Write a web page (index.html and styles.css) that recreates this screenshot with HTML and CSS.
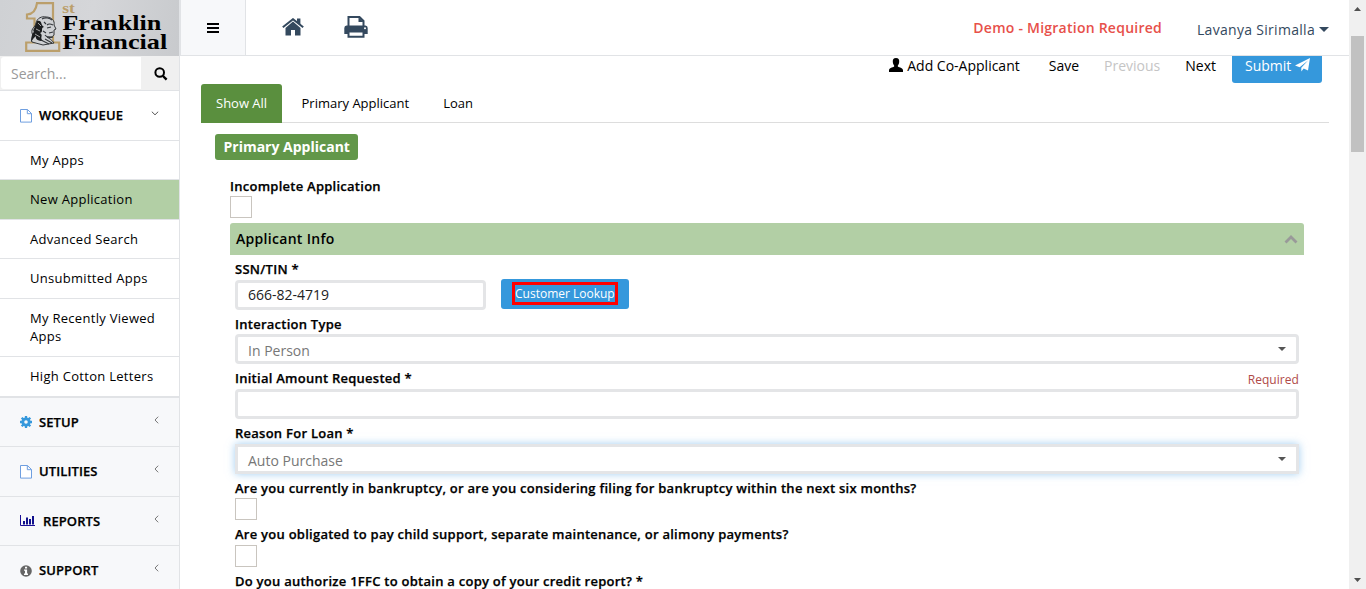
FILE: index.html
```html
<!DOCTYPE html>
<html lang="en">
<head>
<meta charset="utf-8">
<title>New Application</title>
<link rel="stylesheet" href="styles.css">
</head>
<body>
<div class="app">
  <aside class="sidebar">
    <div class="logo">
      <svg class="logo-mark" width="36" height="50" viewBox="0 0 36 50">
        <path d="M12 1.2H28V40.5H34.2V48.8H1.2V40.5H9.5V16.5H2V12.5C7 12.3 11 9 12 1.2Z" fill="#d3d5d8" stroke="#bb9f6b" stroke-width="2.2"/>
        <path d="M11 21C12 16 17 14 21 15C27 15 30 19 29 23L31 27L29 28L29 33C27 36 24 34 22 35C25 37 27 38 29 41L18 43L7 40C5 37 9 35 7 31C6 26 10 26 11 21Z" fill="#ced0d3" stroke="#34373a" stroke-width="1"/>
        <path d="M12 19C18 18 15 23 19 25C15 26 19 30 15 31C19 34 14 35 18 39C13 39 10 37 11 34C8 36 7 39 6 40C7 36 6 32 9 30C7 28 10 26 10 24Z" fill="#1c1e20"/>
        <path d="M13 21L16 24M11 27L15 29M10 32L15 35M8 37L12 40" stroke="#ccc" stroke-width=".8"/>
        <path d="M17 17C20 15 25 16 27 18M22 23C24 21 26 22 28 23M22 26L26 25M24 31L28 30M20 33C22 36 25 36 28 35M16 38L24 42M20 37L27 41M19 20L21 22M18 29L21 31" fill="none" stroke="#33373b" stroke-width="1.1"/>
      </svg>
      <div class="logo-text"><span class="logo-st">st</span><span>Franklin</span><span>Financial</span></div>
    </div>
    <div class="search">
      <div class="search-input">Search...</div>
      <div class="search-btn"><svg width="14" height="14" viewBox="0 0 14 14"><circle cx="5.7" cy="5.5" r="4.3" fill="none" stroke="#000" stroke-width="2"/><path d="M9 9L12.6 12.7" stroke="#000" stroke-width="2.4"/></svg></div>
    </div>
    <div class="group group-open">
      <svg class="gi" width="12" height="14" viewBox="0 0 12 14"><path d="M.5 .5H7.5L11.5 4.5V13.1H.5ZM7.3 .5V4.7H11.5" fill="#fff" stroke="#6f9fe0"/></svg>
      <span class="gt">WORKQUEUE</span>
      <svg class="caret" width="8" height="5" viewBox="0 0 8 5"><path d="M.8 .7L4 3.8L7.2 .7" fill="none" stroke="#555"/></svg>
    </div>
    <div class="item h39">My Apps</div>
    <div class="item h40 active">New Application</div>
    <div class="item h39">Advanced Search</div>
    <div class="item h40">Unsubmitted Apps</div>
    <div class="item h58">My Recently Viewed<br>Apps</div>
    <div class="item h40">High Cotton Letters</div>
    <div class="group first">
      <svg class="gi" width="12" height="12" viewBox="0 0 12 12"><circle cx="6" cy="6" r="3.2" fill="none" stroke="#3598dc" stroke-width="2.8"/><path d="M6 0V2.5M6 9.5V12M0 6H2.5M9.5 6H12M1.7 1.7L3.4 3.4M8.6 8.6L10.3 10.3M10.3 1.7L8.6 3.4M3.4 8.6L1.7 10.3" stroke="#3598dc" stroke-width="2.3"/></svg>
      <span class="gt">SETUP</span>
      <svg class="caret" width="5" height="8" viewBox="0 0 5 8"><path d="M4.2 .7L1 4L4.2 7.3" fill="none" stroke="#777"/></svg>
    </div>
    <div class="group">
      <svg class="gi" width="12" height="14" viewBox="0 0 12 14"><path d="M.5 .5H7.5L11.5 4.5V13.1H.5ZM7.3 .5V4.7H11.5" fill="#fff" stroke="#6f9fe0"/></svg>
      <span class="gt">UTILITIES</span>
      <svg class="caret" width="5" height="8" viewBox="0 0 5 8"><path d="M4.2 .7L1 4L4.2 7.3" fill="none" stroke="#777"/></svg>
    </div>
    <div class="group short">
      <svg class="gi" width="15" height="12" viewBox="0 0 15 12"><path d="M.5 0V10.5H15" fill="none" stroke="#1c0f96"/><path d="M4 9.5V6M7 9.5V2.5M10 9.5V4M13 9.5V1" stroke="#10108c" stroke-width="2"/></svg>
      <span class="gt">REPORTS</span>
      <svg class="caret" width="5" height="8" viewBox="0 0 5 8"><path d="M4.2 .7L1 4L4.2 7.3" fill="none" stroke="#777"/></svg>
    </div>
    <div class="group">
      <svg class="gi" width="12" height="12" viewBox="0 0 12 12"><circle cx="6" cy="6" r="5.8" fill="#666"/><path d="M5 1.7H7.1V3.5H5ZM4 4.5H7.1V8.6H8V10H4V8.6H5V5.8H4Z" fill="#fff"/></svg>
      <span class="gt">SUPPORT</span>
      <svg class="caret" width="5" height="8" viewBox="0 0 5 8"><path d="M4.2 .7L1 4L4.2 7.3" fill="none" stroke="#777"/></svg>
    </div>
  </aside>

  <main class="main">
    <header class="topbar">
      <div class="toggle"><svg width="12" height="10" viewBox="0 0 12 10"><path d="M0 1H12M0 5H12M0 9H12" stroke="#000" stroke-width="2"/></svg></div>
      <svg class="home" width="22" height="18" viewBox="0 0 22 18"><path d="M11 3.6L18.5 10V17.5H13V12H9V17.5H3.5V10Z" fill="#34495e"/><path d="M.8 9.3L11 1.2L21.2 9.3" fill="none" stroke="#34495e" stroke-width="2"/><path d="M15 .5H18.4V7L15 4.3Z" fill="#34495e"/></svg>
      <svg class="printer" width="24" height="22" viewBox="0 0 24 22"><path d="M4.5 11V1H15.5L19.5 5V11" fill="#fff" stroke="#34495e" stroke-width="2"/><path d="M14.5 1V6H19.5Z" fill="#34495e"/><path d="M2.5 9.5H21.5Q23.7 9.5 23.7 12V18H.3V12Q.3 9.5 2.5 9.5Z" fill="#34495e"/><path d="M4.5 15.5H19.5V20.7H4.5Z" fill="#fff" stroke="#34495e" stroke-width="2"/><circle cx="21" cy="12.2" r="1" fill="#fff"/></svg>
      <span class="demo">Demo - Migration Required</span>
      <span class="user">Lavanya Sirimalla</span>
      <svg class="user-caret" width="10" height="5" viewBox="0 0 10 5"><path d="M0 0H10L5 5Z" fill="#34495e"/></svg>
    </header>
    <div class="actions">
      <svg class="person" width="14" height="14" viewBox="0 0 14 14"><path d="M7 0C9.5 0 10.4 1.6 10.2 4C10 6.3 9 7 8.7 8C8.8 9.5 13.7 9.4 14 12V14H0V12C.3 9.4 5.2 9.5 5.3 8C5 7 4 6.3 3.8 4C3.6 1.6 4.5 0 7 0Z"/></svg>
      <span class="a-add">Add Co-Applicant</span>
      <span class="a-save">Save</span>
      <span class="a-prev">Previous</span>
      <span class="a-next">Next</span>
      <div class="submit"><span>Submit</span><svg width="15" height="14" viewBox="0 0 15 14"><path d="M15 0L13 12.5L8.7 10.6L6.3 13.6V9.8L13 2.5L4.7 9.3L0 7.6Z" fill="#fff"/></svg></div>
    </div>
    <nav class="tabs">
      <span class="tab tab-on">Show All</span>
      <span class="tab t-primary">Primary Applicant</span>
      <span class="tab t-loan">Loan</span>
    </nav>
    <div class="form">
      <div class="badge">Primary Applicant</div>
      <div class="block">
        <div class="label l-inc">Incomplete Application</div>
        <div class="check"></div>
        <div class="section"><span>Applicant Info</span><svg width="14" height="9" viewBox="0 0 14 9"><path d="M1.5 7.5L7 2L12.5 7.5" fill="none" stroke="#999" stroke-width="2.8"/></svg></div>
        <div class="fields">
          <div class="label l-ssn">SSN/TIN *</div>
          <div class="ssn-row"><div class="input ssn">666-82-4719</div><div class="lookup"><div class="mark">Customer Lookup</div></div></div>
          <div class="label l-int">Interaction Type</div>
          <div class="input select"><span>In Person</span><svg width="8" height="4" viewBox="0 0 8 4"><path d="M0 0H8L4 4Z" fill="#555"/></svg></div>
          <div class="label l-row"><span>Initial Amount Requested *</span><span class="required">Required</span></div>
          <div class="input"></div>
          <div class="label l-row">Reason For Loan *</div>
          <div class="input select focus"><span>Auto Purchase</span><svg width="8" height="4" viewBox="0 0 8 4"><path d="M0 0H8L4 4Z" fill="#555"/></svg></div>
          <div class="label l-q1">Are you currently in bankruptcy, or are you considering filing for bankruptcy within the next six months?</div>
          <div class="check"></div>
          <div class="label l-q2">Are you obligated to pay child support, separate maintenance, or alimony payments?</div>
          <div class="check"></div>
          <div class="label l-q3">Do you authorize 1FFC to obtain a copy of your credit report? *</div>
        </div>
      </div>
    </div>
  </main>

  <div class="scrollbar">
    <svg class="sb-up" width="7" height="4" viewBox="0 0 7 4"><path d="M0 4H7L3.5 0Z" fill="#505050"/></svg>
    <div class="thumb"></div>
    <svg class="sb-down" width="7" height="4" viewBox="0 0 7 4"><path d="M0 0H7L3.5 4Z" fill="#505050"/></svg>
  </div>
</div>
</body>
</html>
```
FILE: styles.css
```css
* { box-sizing: border-box; }
body { margin: 0; height: 589px; overflow: hidden; background: #fff; color: #000; font-family: "Open Sans", sans-serif; font-size: 13px; }
svg { display: block; flex: none; }
span { white-space: nowrap; }
.app { display: flex; height: 589px; }

/* sidebar */
.sidebar { width: 180px; flex: none; border-right: 1px solid #e1e3e6; background: #f7f8fa; overflow: hidden; }
.logo { display: flex; height: 56px; width: 180px; padding: 2px 0 0 25px; background: linear-gradient(100deg, #cfd1d4, #d5d6d9 50%, #c8cacd); }
.logo-text { display: flex; flex-direction: column; width: 80px; padding-left: 1px; font: bold 21px/19px "Liberation Serif", serif; transform: scaleX(1.25); transform-origin: 0 0; }
.logo-st { color: #bb9f6b; font-size: 14px; font-weight: 700; line-height: 14px; height: 12px; }
.search { display: flex; height: 35px; width: 180px; padding: 1px 0 1px 1px; background: #f0f0f0; border-bottom: 1px solid #e1e3e6; }
.search-input { width: 140px; height: 32px; border-radius: 3px 0 0 3px; background: #fff; color: #999; font-size: 14px; line-height: 33px; padding-left: 10px; }
.search-btn { padding: 10px 0 0 13px; }
.group { display: flex; align-items: center; height: 50px; padding-left: 20px; border-bottom: 1px solid #e1e3e6; }
.group-open { background: #fff; }
.group.first { border-top: 1px solid #e1e3e6; }
.group.short { height: 49px; }
.gt { margin: -1px 0 0 7px; font-weight: 600; letter-spacing: .1px; -webkit-text-stroke: .25px #000; }
.short .gt { margin-left: 8px; }
.caret { margin: -5px 20px 0 auto; }
.item { padding: 0 0 1px 30px; display: flex; align-items: center; line-height: 18px; letter-spacing: .29px; background: #fff; border-bottom: 1px solid #e1e3e6; font-weight: 500; }
.item.active { background: #b2cfa5; }
.h39 { height: 39px; }
.h40 { height: 40px; }
.h58 { height: 58px; }

/* main */
.main { width: 1169px; flex: none; }
.topbar { display: flex; align-items: center; height: 56px; border-bottom: 1px solid #e1e3e6; }
.toggle { width: 66px; height: 55px; padding: 23px 0 0 26px; border: solid #e1e3e6; border-width: 0 1px; background: #f7f8fa; }
.home { margin: -1px 0 0 36px; }
.printer { margin: -1px 0 0 40px; }
.demo { margin-left: auto; color: #e7504a; font-weight: 600; font-size: 14px; letter-spacing: .24px; }
.user { margin: 4px 4px 0 35px; color: #34495e; font-size: 14px; letter-spacing: .3px; }
.user-caret { margin-right: 20px; margin-top: 3px; }
.actions { display: flex; height: 28px; justify-content: flex-end; padding-right: 27px; font-size: 14px; line-height: 20px; }
.person { margin: 2px 4px 0 0; }
.a-save { margin-left: 29px; }
.a-prev { margin-left: 25px; color: #c5c5c5; }
.a-next { margin-left: 25px; }
.submit { display: flex; gap: 4px; width: 90px; height: 27px; margin-left: 16px; padding-left: 13px; background: #3598dc; color: #fff; border-radius: 0 0 3px 3px; }
.submit svg { margin-top: 2px; }
.tabs { display: flex; height: 39px; margin: 0 20px 0 21px; border-bottom: 1px solid #ddd; }
.tab { line-height: 39px; }
.tab-on { width: 81px; height: 39px; padding-left: 15px; color: #fff; background: #5a8f3e; border-radius: 3px 3px 0 0; }
.t-primary { margin-left: 19.5px; }
.t-loan { margin-left: 34px; }
.form { padding: 11px 45px 0 35px; }
.badge { width: 143px; height: 26px; padding-left: 8.5px; background: #629749; border-radius: 3px; color: #fff; font-size: 14px; font-weight: 700; line-height: 26px; white-space: nowrap; }
.block { padding-left: 15px; }
.label { font-weight: 600; line-height: 18px; letter-spacing: .255px; white-space: nowrap; -webkit-text-stroke: .25px #000; }
.l-inc { height: 36px; padding-top: 17px; }
.check { width: 22px; height: 22px; border: 1px solid #c9c5bf; background: #fff; }
.section { display: flex; align-items: center; justify-content: space-between; height: 32px; margin-top: 5px; padding: 0 6px; background: #b2cfa5; border-radius: 3px 3px 0 0; font-size: 14px; font-weight: 600; letter-spacing: .3px; }
.section span { margin-top: -2px; }
.fields { padding: 0 5px; }
.l-ssn { height: 24px; padding-top: 5px; }
.ssn-row { display: flex; gap: 15px; height: 31px; }
.input { height: 30px; border: 3px solid #e4e5e7; border-radius: 4px; background: #fff; font-size: 14px; padding-left: 10px; line-height: 24px; }
.ssn { width: 251px; margin-top: 1px; color: #222; line-height: 23px; }
.select { display: flex; justify-content: space-between; padding-right: 10px; color: #777; line-height: 27px; }
.select svg { margin-top: 10px; }
.focus { border-radius: 0; box-shadow: 0 0 8px rgba(102, 175, 233, .6); }
.lookup { width: 128px; height: 30px; padding: 3px 0 0 11px; background: #3598dc; border-radius: 3px; }
.mark { width: 106px; height: 23px; border: 3px solid #f00; color: #fff; font-size: 12px; line-height: 17px; white-space: nowrap; }
.l-int { height: 24px; padding-top: 5px; }
.l-row { display: flex; justify-content: space-between; height: 25px; padding-top: 5px; }
.required { color: #b04a48; font-size: 12px; font-weight: 400; line-height: 21px; letter-spacing: .05px; -webkit-text-stroke: 0; }
.l-q1 { height: 24px; padding-top: 5px; }
.l-q2 { height: 25px; padding-top: 5px; }
.l-q3 { height: 22px; padding-top: 5px; }

/* page scrollbar */
.scrollbar { width: 17px; flex: none; display: flex; flex-direction: column; align-items: center; background: #f0f0f0; }
.sb-up { margin-top: 7px; }
.thumb { width: 13px; height: 116px; margin-top: 25px; background: #c1c1c1; }
.sb-down { margin: auto 0 7px; }
```
